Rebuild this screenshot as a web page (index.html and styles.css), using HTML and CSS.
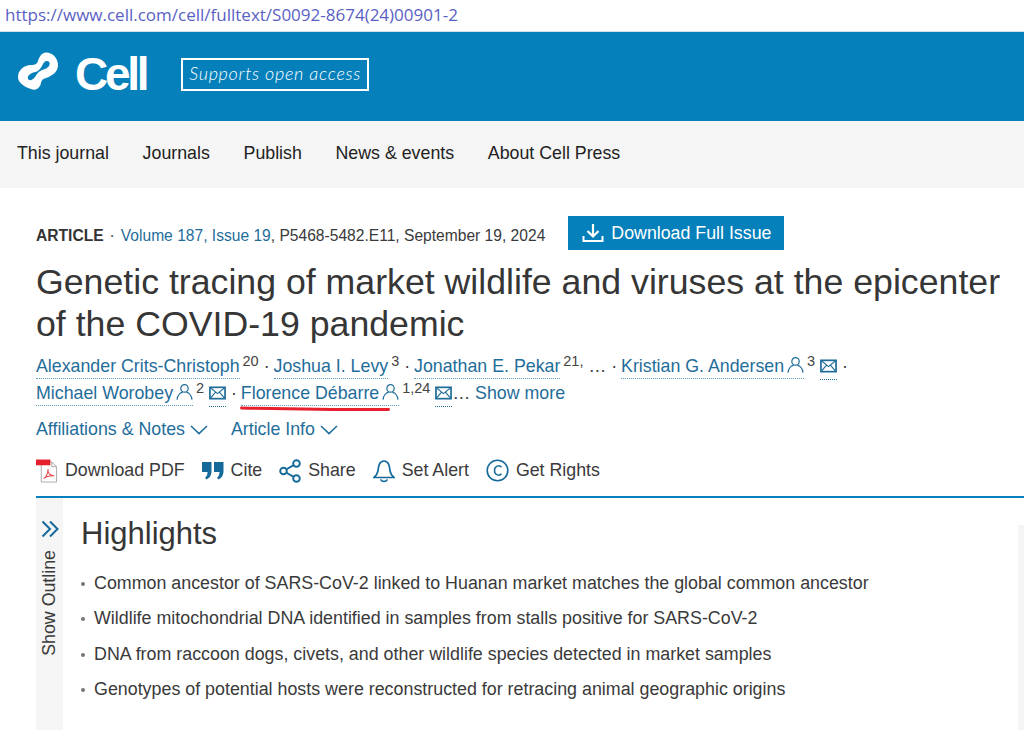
FILE: index.html
```html
<!DOCTYPE html>
<html lang="en">
<head>
    <meta charset="UTF-8">
    <meta name="viewport" content="width=device-width, initial-scale=1.0">
    <title>Genetic tracing of market wildlife and viruses - Cell</title>
    <link rel="stylesheet" href="styles.css">
</head>
<body>
    <svg class="sprite" width="0" height="0" aria-hidden="true">
        <symbol id="person" viewBox="0 0 18 18">
            <circle cx="9" cy="5.2" r="3.9" fill="none" stroke="currentColor" stroke-width="1.3"/>
            <path d="M1.2 16.6c.3-4 3.2-6.6 5.4-7.2M16.8 16.6c-.3-4-3.2-6.6-5.4-7.2" fill="none" stroke="currentColor" stroke-width="1.3" stroke-linecap="round"/>
        </symbol>
        <symbol id="mail" viewBox="0 0 18 14">
            <rect x="1" y="1" width="16" height="12" fill="none" stroke="currentColor" stroke-width="1.8"/>
            <path d="M1.5 1.5 9 7.6l7.5-6.1M1.5 12.5 7 6.2M16.5 12.5 11 6.2" fill="none" stroke="currentColor" stroke-width="1.2"/>
        </symbol>
        <symbol id="chevron" viewBox="0 0 18 10">
            <path d="M1 1l8 7.6L17 1" fill="none" stroke="currentColor" stroke-width="1.5"/>
        </symbol>
    </svg>

    <div class="url-bar">https://www.cell.com/cell/fulltext/S0092-8674(24)00901-2</div>

    <header class="brand-bar">
        <svg class="cell-mark" width="42" height="42" viewBox="0 0 42 42" aria-hidden="true">
            <path fill="#fff" fill-rule="evenodd" d="M27 1C33-1 41 5 41 13C41 20 35 24 29 26C25 27 24.500 29 24 31C23 36 19 39 14 37C8 35 1 31 1 25C1 18 7 13 14 13C18 13 20 12 21 9C22 5 24 2 27 1zM30 9C28 9 27 10 26 12C25 14 24 16 22 18C20 20 17 20 14 21.500C11 23 10 26 11.500 27.500C13 29 16 28 18 25C20 22 21 20 24 18.500C26 17.500 30 17 32 14C33.500 11.500 32.500 9 30 9z"/>
        </svg>
        <span class="cell-word">Cell</span>
        <span class="open-access">Supports open access</span>
    </header>

    <nav class="main-nav">
        <a href="#">This journal</a>
        <a href="#">Journals</a>
        <a href="#">Publish</a>
        <a href="#">News &amp; events</a>
        <a href="#">About Cell Press</a>
    </nav>

    <main class="article">
        <div class="article-meta">
            <div class="meta-text">
                <b>ARTICLE</b><span class="sep">&middot;</span><a href="#">Volume 187, Issue 19</a>, P5468-5482.E11, September 19, 2024
            </div>
            <a class="download-issue" href="#">
                <svg width="22" height="20" viewBox="0 0 22 20" aria-hidden="true">
                    <path d="M11 1v12M5.500 8 11 13.500 16.500 8" fill="none" stroke="#fff" stroke-width="2.200"/>
                    <path d="M1.500 13v5h19v-5" fill="none" stroke="#fff" stroke-width="2"/>
                </svg>
                Download Full Issue
            </a>
        </div>

        <h1>Genetic tracing of market wildlife and viruses at the epicenter of the COVID-19 pandemic</h1>

        <div class="authors">
            <a class="author" href="#">Alexander Crits-Christoph</a> <sup>20</sup> <span class="dot">&middot;</span>
            <a class="author" href="#">Joshua I. Levy</a> <sup>3</sup> <span class="dot">&middot;</span>
            <a class="author" href="#">Jonathan E. Pekar</a> <sup>21,</sup> <span>&hellip;</span> <span class="dot">&middot;</span>
            <a class="author" href="#">Kristian G. Andersen<svg class="person"><use href="#person"/></svg></a> <sup>3</sup>
            <a class="mail-link" href="#"><svg class="mail"><use href="#mail"/></svg></a> <span class="dot">&middot;</span><br>
            <a class="author" href="#">Michael Worobey<svg class="person"><use href="#person"/></svg></a> <sup>2</sup>
            <a class="mail-link" href="#"><svg class="mail"><use href="#mail"/></svg></a> <span class="dot">&middot;</span>
            <a class="author" href="#">Florence Débarre<svg class="person"><use href="#person"/></svg></a> <sup>1,24</sup>
            <a class="mail-link" href="#"><svg class="mail"><use href="#mail"/></svg></a><span>&hellip;</span>
            <a class="show-more" href="#">Show more</a>
            <svg class="red-mark" width="150" height="6" viewBox="0 0 150 6" aria-hidden="true">
                <path d="M1.500 2c40 .8 100 1.800 147 1.500" fill="none" stroke="#e8202e" stroke-width="3" stroke-linecap="round"/>
            </svg>
        </div>

        <div class="info-links">
            <a href="#">Affiliations &amp; Notes<svg class="chevron"><use href="#chevron"/></svg></a>
            <a href="#">Article Info<svg class="chevron"><use href="#chevron"/></svg></a>
        </div>

        <div class="tools">
            <a href="#">
                <svg width="22" height="24" viewBox="0 0 23 24" aria-hidden="true">
                    <path d="M5.500 2.500h11l5 5v16h-16z" fill="#fff" stroke="#a9a9a9"/>
                    <path d="M16.500 2.500v5h5" fill="none" stroke="#a9a9a9"/>
                    <path d="M8 20c2.500-1.500 4.500-6 4.600-10-.6 4 2 7 6.400 7-4.500-.3-8.500.8-11 3z" fill="none" stroke="#e8424a" stroke-width="1.100"/>
                    <rect x="0" y="0" width="15" height="6" fill="#e3202c"/>
                </svg>
                Download PDF
            </a>
            <a href="#">
                <svg width="22" height="20" viewBox="0 0 22 20" aria-hidden="true">
                    <path d="M0 1h9.500v9c0 4-2 7.500-5.500 8.500l-.8-2C4.800 15.500 5.500 13.500 5.500 11H0zM12 1h9.500v9c0 4-2 7.500-5.500 8.500l-.8-2c1.600-1 2.300-3 2.300-5.500H12z" fill="#156a9a"/>
                </svg>
                Cite
            </a>
            <a href="#">
                <svg width="22" height="24" viewBox="0 0 22 24" aria-hidden="true">
                    <g fill="none" stroke="#156a9a" stroke-width="1.900">
                        <circle cx="4.500" cy="12" r="3.300"/>
                        <circle cx="17.500" cy="4.500" r="3.300"/>
                        <circle cx="17.500" cy="19.500" r="3.300"/>
                        <path d="M7.500 10.300l7.200-4.200M7.500 13.700l7.200 4.200"/>
                    </g>
                </svg>
                Share
            </a>
            <a href="#">
                <svg width="22" height="24" viewBox="0 0 22 24" aria-hidden="true">
                    <g fill="none" stroke="#156a9a" stroke-width="1.700">
                        <path d="M1 18.500c2.500-2 3.500-3.500 4-7 .5-4 1-9.500 6-9.500s5.500 5.500 6 9.500c.5 3.500 1.500 5 4 7z"/>
                        <path d="M8 21c.8 1.800 5.200 1.800 6 0" stroke-linecap="round"/>
                    </g>
                </svg>
                Set Alert
            </a>
            <a href="#">
                <svg width="23" height="23" viewBox="0 0 23 23" aria-hidden="true">
                    <circle cx="11.500" cy="11.500" r="10.300" fill="none" stroke="#156a9a" stroke-width="1.600"/>
                    <path d="M15.500 8.300c-2-2.600-7-1.600-7 3.200s5 5.800 7 3.200" fill="none" stroke="#156a9a" stroke-width="1.500"/>
                </svg>
                Get Rights
            </a>
        </div>

        <div class="body-row">
            <aside class="outline">
                <svg width="18" height="18" viewBox="0 0 18 17" aria-hidden="true">
                    <path d="M1.500 1 9 8.500l-7.500 7.500M9 1l7.500 7.500L9 16" fill="none" stroke="#156a9a" stroke-width="2"/>
                </svg>
                <span class="outline-label">Show Outline</span>
            </aside>
            <section class="highlights">
                <h2>Highlights</h2>
                <ul>
                    <li>Common ancestor of SARS-CoV-2 linked to Huanan market matches the global common ancestor</li>
                    <li>Wildlife mitochondrial DNA identified in samples from stalls positive for SARS-CoV-2</li>
                    <li>DNA from raccoon dogs, civets, and other wildlife species detected in market samples</li>
                    <li>Genotypes of potential hosts were reconstructed for retracing animal geographic origins</li>
                </ul>
            </section>
            <div class="side-strip"></div>
        </div>
    </main>
</body>
</html>
```

FILE: styles.css
```css
* {
    margin: 0;
    padding: 0;
    box-sizing: border-box;
}

html, body {
    height: 730px;
    overflow: hidden;
}

body {
    font-family: "Liberation Sans", Arial, sans-serif;
    background: #fff;
    color: #3a3a3a;
}

a {
    color: #1f6d9a;
    text-decoration: none;
}

.sprite {
    position: absolute;
}

.url-bar {
    height: 32px;
    padding: 3px 0 0 5px;
    font-family: "Open Sans", sans-serif;
    font-size: 17px;
    line-height: 24px;
    color: #5a5fc4;
    border-bottom: 1px solid #cfe3ee;
}

.brand-bar {
    height: 89px;
    display: flex;
    align-items: center;
    padding-left: 17px;
    background: #0580bb;
    color: #fff;
}

.cell-mark {
    margin-top: -7px;
}

.cell-word {
    margin: -6px 0 0 16px;
    font-size: 46px;
    font-weight: 700;
    letter-spacing: -3.300px;
    line-height: 44px;
}

.open-access {
    margin: -5px 0 0 35px;
    width: 188px;
    height: 33px;
    padding-left: 6px;
    border: 2px solid #fff;
    font-family: "Lato", sans-serif;
    font-style: italic;
    font-weight: 300;
    font-size: 18px;
    line-height: 26px;
    letter-spacing: 0.700px;
    white-space: nowrap;
}

.main-nav {
    height: 67px;
    display: flex;
    align-items: center;
    gap: 33.700px;
    padding: 0 0 2px 17px;
    background: #f5f5f5;
}

.main-nav a {
    font-size: 17.800px;
    color: #222;
}

.article {
    padding: 28px 0 0 36px;
}

.article-meta {
    display: flex;
    align-items: center;
    gap: 23px;
}

.meta-text {
    padding-top: 6px;
    font-size: 15.600px;
    white-space: nowrap;
    color: #3a3a3a;
}

.meta-text b {
    color: #333;
}

.sep {
    margin: 0 6px;
}

.download-issue {
    display: flex;
    align-items: center;
    gap: 7px;
    height: 34px;
    padding: 0 13px 0 14px;
    background: #0580bb;
    color: #fff;
    font-size: 17.800px;
    white-space: nowrap;
}

h1 {
    margin-top: 11px;
    font-size: 35.700px;
    font-weight: 400;
    line-height: 42px;
    color: #363636;
}

.authors {
    position: relative;
    margin-top: 8px;
    font-size: 17.800px;
    line-height: 27px;
    white-space: nowrap;
}

.author {
    padding-bottom: 2px;
    border-bottom: 1px dotted #5f9dbd;
}

.authors sup {
    margin-left: -2px;
    font-size: 14.500px;
    line-height: 0;
    vertical-align: 6px;
    color: #444;
}

.dot {
    margin-right: -1px;
}

.person {
    width: 17px;
    height: 18px;
    margin-left: 3px;
    vertical-align: -2px;
}

.mail-link {
    padding-bottom: 3px;
    border-bottom: 1px dotted #1f6d9a;
}

.mail {
    width: 17px;
    height: 14px;
    vertical-align: -1px;
}

.red-mark {
    position: absolute;
    left: 204px;
    top: 53px;
}

.info-links {
    display: flex;
    gap: 23px;
    margin-top: 9px;
    font-size: 17.800px;
    line-height: 27px;
}

.chevron {
    width: 18px;
    height: 10px;
    margin-left: 5px;
}

.tools {
    display: flex;
    align-items: center;
    gap: 17px;
    width: 988px;
    height: 47px;
    padding-bottom: 6px;
    margin-top: 8px;
    border-bottom: 2px solid #0580bb;
}

.tools a {
    display: flex;
    align-items: center;
    gap: 7px;
    font-size: 17.800px;
    color: #3a3a3a;
}

.body-row {
    display: flex;
    height: 240px;
}

.outline {
    width: 27px;
    flex-shrink: 0;
    background: #f5f5f5;
    padding-top: 22px;
    display: flex;
    flex-direction: column;
    align-items: center;
}

.outline-label {
    margin-top: 12px;
    writing-mode: vertical-rl;
    transform: rotate(180deg);
    font-size: 17.800px;
    color: #3a3a3a;
}

.highlights {
    flex: 1;
    padding: 18px 0 0 18px;
}

h2 {
    font-size: 31px;
    font-weight: 400;
    line-height: 36px;
    color: #363636;
}

.highlights ul {
    margin-top: 14px;
    list-style: none;
}

.highlights li {
    position: relative;
    padding-left: 13px;
    font-size: 17.850px;
    line-height: 35.300px;
}

.highlights li:before {
    content: "";
    position: absolute;
    left: 0;
    top: 16px;
    width: 4px;
    height: 4px;
    border-radius: 50%;
    background: #777;
}

.side-strip {
    width: 6px;
    margin-top: 27px;
    background: #f5f5f5;
}
```
